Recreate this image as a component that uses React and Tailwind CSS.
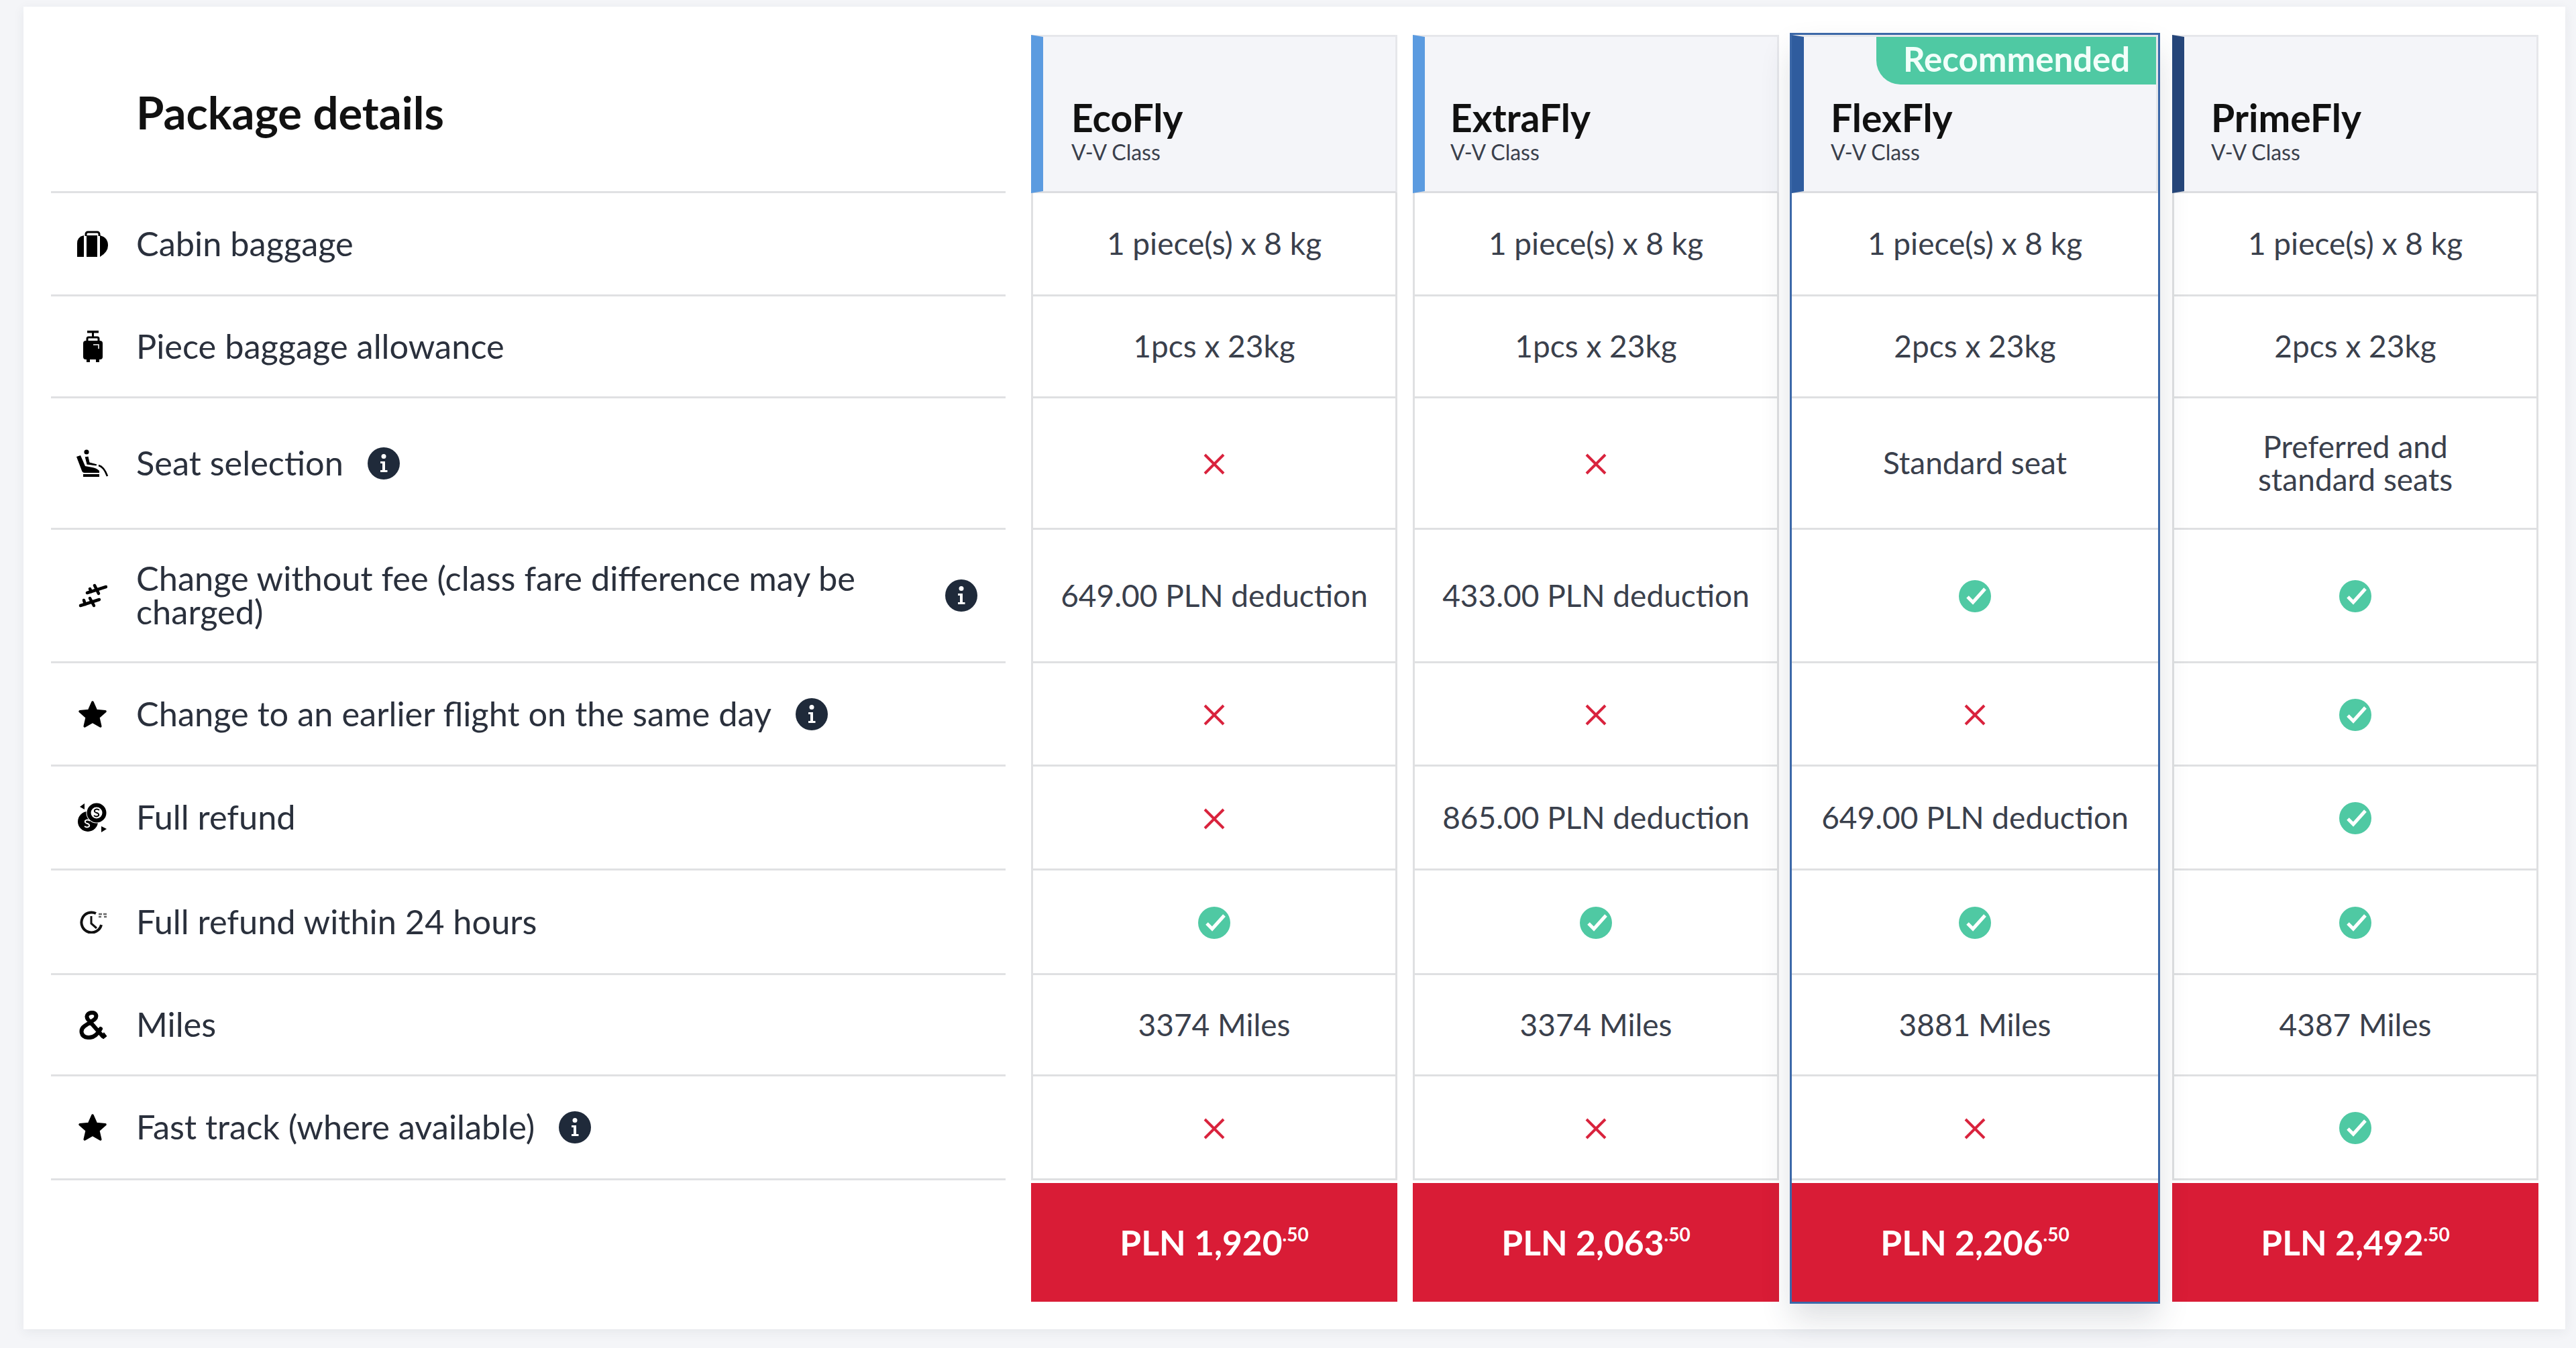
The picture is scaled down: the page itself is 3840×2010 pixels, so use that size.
const FONT = "font-['Lato','Liberation_Sans',sans-serif]";

function CabinIcon() {
  return (
    <svg viewBox="0 0 46 39" className="w-[46px] h-[39px]" fill="#000">
      <path d="M13 8V5a3 3 0 0 1 3-3h14a3 3 0 0 1 3 3v3" fill="none" stroke="#000" strokeWidth="3" />
      <path d="M0 39V19Q0 9 10 7V39Z" />
      <rect x="14" y="7" width="16" height="32" />
      <path d="M34 7Q46 10 46 22Q46 32 34 39Z" />
    </svg>
  );
}
function PieceIcon() {
  return (
    <svg viewBox="0 0 29 47" className="w-[29px] h-[47px]" fill="#000">
      <rect x="6" y="0" width="17" height="3.5" />
      <rect x="13" y="3" width="3" height="8" />
      <path d="M6 16v-4a2 2 0 0 1 2-2h13a2 2 0 0 1 2 2v4" fill="none" stroke="#000" strokeWidth="3" />
      <rect x="0" y="15" width="29" height="28" rx="4" />
      <rect x="5" y="42" width="5" height="5" />
      <rect x="19" y="42" width="5" height="5" />
      <path d="M15 21h8v6" fill="none" stroke="#fff" strokeWidth="1.5" />
    </svg>
  );
}
function SeatIcon() {
  return (
    <svg viewBox="0 0 48 42" className="w-[48px] h-[42px]" fill="#000">
      <circle cx="15" cy="4" r="3.6" />
      <path d="M0 11L6 9L13 25L24 27Q30 28 34 32V35H12Q9 35 8 32Z" />
      <path d="M12 11L18 10L20 19L31 22L30 25L15 23Z" stroke="#fff" strokeWidth="1.2" />
      <rect x="10" y="37" width="24" height="4" />
      <path d="M33 24Q41 26 46 40" fill="none" stroke="#000" strokeWidth="2.6" />
    </svg>
  );
}
function ChangeIcon() {
  return (
    <svg viewBox="0 0 43 37" className="w-[43px] h-[37px]" fill="none" stroke="#000" strokeWidth="4.500" strokeLinecap="round">
      <path d="M13 14L41 5" />
      <path d="M27 9L24 3" />
      <path d="M19 12L17 8" />
      <path d="M27 9L30 15" />
      <path d="M3 33L31 24" />
      <path d="M10 31L8 25" />
      <path d="M20 27.500L17 22" />
      <path d="M20 27.500L23 33" />
    </svg>
  );
}
function StarIcon() {
  return (
    <svg viewBox="0 0 44 42" className="w-[44px] h-[42px]" fill="#000" stroke="#000" strokeWidth="3.5" strokeLinejoin="round">
      <path d="M22 3L27.500 15.500L41 16.800L30.800 25.800L33.800 39L22 32.200L10.200 39L13.200 25.800L3 16.800L16.500 15.500Z" />
    </svg>
  );
}
function RefundIcon() {
  return (
    <svg viewBox="0 0 44 44" className="w-[44px] h-[44px]">
      <circle cx="15" cy="28" r="15" fill="#000" />
      <circle cx="28" cy="15" r="15.500" fill="#fff" />
      <circle cx="28" cy="15" r="11.500" fill="none" stroke="#000" strokeWidth="6" />
      <path d="M32 11Q28 8 25 11Q24 14 28 15Q32 16 31 19Q28 22 24 19" fill="none" stroke="#000" strokeWidth="2" />
      <path d="M18 27Q14 24 11 27Q10 30 14 31Q18 32 17 35Q14 38 10 35" fill="none" stroke="#fff" strokeWidth="2" />
      <path d="M10 1L3 6L10 10Z" fill="#000" />
      <path d="M35 35L43 39L35 44Z" fill="#000" />
    </svg>
  );
}
function ClockIcon() {
  return (
    <svg viewBox="0 0 43 35" className="w-[43px] h-[35px]" fill="none" stroke="#111" strokeWidth="4">
      <path d="M26 5A15 15 0 1 0 34 22" />
      <path d="M19 9V20L27 27" strokeWidth="3" />
      <path d="M30 6h5M30 10h4M37 6h5M38 10h4" strokeWidth="2.400" stroke="#666" />
    </svg>
  );
}
function MilesIcon() {
  return (
    <svg viewBox="0 0 43 43" className="w-[43px] h-[43px]" fill="none" stroke="#000" strokeWidth="6" strokeLinecap="round">
      <path d="M36 38L14 13C10 7 15 3 20 3C27 3 28 9 24 13L9 23C2 28 3 39 14 40C22 41 28 36 33 27" />
      <path d="M38 33L42 38L37 42L33 38Z" fill="#000" strokeWidth="1" />
    </svg>
  );
}
function InfoIcon() {
  return (
    <svg viewBox="0 0 48 48" className="w-[48px] h-[48px] shrink-0">
      <circle cx="24" cy="24" r="24" fill="#1f2a3a" />
      <circle cx="24" cy="13.500" r="3.500" fill="#fff" />
      <path d="M19 21H26V34H29.500V37H19V34H22V24H19Z" fill="#fff" />
    </svg>
  );
}
function CheckIcon() {
  return (
    <svg viewBox="0 0 48 48" className="mt-[2px] w-[48px] h-[48px]">
      <circle cx="24" cy="24" r="24" fill="#4fc9a3" />
      <path d="M13 25L21 33L39 13" fill="none" stroke="#fff" strokeWidth="5" />
    </svg>
  );
}
function CrossIcon() {
  return (
    <svg viewBox="0 0 32 32" className="mt-[3px] w-[32px] h-[32px]">
      <path d="M2 2L30 30M30 2L2 30" fill="none" stroke="#d9233d" strokeWidth="4" />
    </svg>
  );
}

const YES = "yes";
const NO = "no";

const rows = [
  { h: "h-[154px]", icon: <CabinIcon />, label: "Cabin baggage", cells: ["1 piece(s) x 8 kg", "1 piece(s) x 8 kg", "1 piece(s) x 8 kg", "1 piece(s) x 8 kg"] },
  { h: "h-[152px]", icon: <PieceIcon />, label: "Piece baggage allowance", cells: ["1pcs x 23kg", "1pcs x 23kg", "2pcs x 23kg", "2pcs x 23kg"] },
  { h: "h-[196px]", icon: <SeatIcon />, label: "Seat selection", info: true, cells: [NO, NO, "Standard seat", "Preferred and standard seats"] },
  { h: "h-[199px]", icon: <ChangeIcon />, label: "Change without fee (class fare difference may be charged)", wide: true, info: true, cells: ["649.00 PLN deduction", "433.00 PLN deduction", YES, YES] },
  { h: "h-[154px]", icon: <StarIcon />, label: "Change to an earlier flight on the same day", info: true, cells: [NO, NO, NO, YES] },
  { h: "h-[155px]", icon: <RefundIcon />, label: "Full refund", cells: [NO, "865.00 PLN deduction", "649.00 PLN deduction", YES] },
  { h: "h-[156px]", icon: <ClockIcon />, label: "Full refund within 24 hours", cells: [YES, YES, YES, YES] },
  { h: "h-[151px]", icon: <MilesIcon />, label: "Miles", cells: ["3374 Miles", "3374 Miles", "3881 Miles", "4387 Miles"] },
  { h: "h-[155px]", icon: <StarIcon />, label: "Fast track (where available)", info: true, cells: [NO, NO, NO, YES] },
];

const packages = [
  { name: "EcoFly", accent: "border-l-[#5b9be0]", price: "PLN 1,920", shift: "", pad: "pl-[42px]" },
  { name: "ExtraFly", accent: "border-l-[#5b9be0]", price: "PLN 2,063", shift: "ml-[2px]", pad: "pl-[38px]" },
  { name: "FlexFly", accent: "border-l-[#2f5c9e]", price: "PLN 2,206", featured: true, shift: "-ml-[2px]", pad: "pl-[40px]" },
  { name: "PrimeFly", accent: "border-l-[#26467a]", price: "PLN 2,492", shift: "", pad: "pl-[40px]" },
];

function Value({ v }) {
  if (v === YES) return <CheckIcon />;
  if (v === NO) return <CrossIcon />;
  return <span className="px-[40px] pb-[2px] text-center text-[46px] leading-[49px] text-[#3a404c]">{v}</span>;
}

function Column({ pkg, index }) {
  const side = pkg.featured ? "" : "border-x-[3px] border-x-[#dfe0e2]";
  return (
    <div
      className={
        pkg.featured
          ? `relative z-10 flex w-[546px] flex-col outline-[3px] outline-[#3c68a8] shadow-[0_24px_44px_rgba(40,50,70,0.16)] ${pkg.shift}`
          : `relative flex w-[546px] flex-col ${pkg.shift}`
      }
    >
      <div className={`relative flex h-[236px] flex-col border-l-[18px] border-t-[3px] border-r-[3px] border-b-[3px] border-t-[#e6e7eb] border-r-[#e6e7eb] border-b-[#dcdde0] bg-[#f4f5f9] pt-[90px] ${pkg.accent} ${pkg.pad}`}>
        {pkg.featured && (
          <div className="absolute right-0 top-0 flex h-[71px] w-[417px] items-center rounded-bl-[36px] bg-[#4fc9a3] pb-[4px] pl-[40px] text-[51px] font-bold text-[#f2fffa]">
            Recommended
          </div>
        )}
        <div className="text-[57px] font-bold leading-[60px] text-[#111]">{pkg.name}</div>
        <div className="mt-[6px] text-[32px] leading-[32px] text-[#3a404c]">V-V Class</div>
      </div>
      {rows.map((r) => (
        <div key={r.label} className={`flex items-center justify-center border-b-[3px] border-b-[#dfe0e2] bg-white ${side} ${r.h}`}>
          <Value v={r.cells[index]} />
        </div>
      ))}
      <div className="mt-[4px] flex h-[177px] items-center justify-center bg-[#d91c36] text-white">
        <span className="text-[51.500px] font-bold leading-none">{pkg.price}</span>
        <span className="mb-[26px] text-[28px] font-bold leading-none">.50</span>
      </div>
    </div>
  );
}

export default function App() {
  return (
    <div className={`h-[2010px] w-full bg-[#f4f5f8] pl-[35px] pt-[10px] ${FONT}`}>
      <div className="flex h-[1972px] w-[3789px] items-start bg-white pl-[41px] pt-[42px] shadow-[0_4px_16px_rgba(40,50,70,0.07)]">
        <div className="flex w-[1423px] flex-col">
          <div className="flex h-[236px] items-center border-b-[3px] border-b-[#e0e1e3] pb-[2px] pl-[127px] text-[67px] font-bold text-[#111]">
            Package details
          </div>
          {rows.map((r) => (
            <div key={r.label} className={`flex items-center border-b-[3px] border-b-[#e0e1e3] ${r.h}`}>
              <div className="flex w-[127px] shrink-0 justify-center pl-[24px] pr-[27px]">{r.icon}</div>
              <div className={`pb-[2px] text-[50.500px] leading-[50px] text-[#2a303c] ${r.wide ? "w-[1170px]" : ""}`}>{r.label}</div>
              {r.info && <div className="ml-[36px]"><InfoIcon /></div>}
            </div>
          ))}
        </div>
        <div className="ml-[38px] flex gap-[21px]">
          {packages.map((p, i) => (
            <Column key={p.name} pkg={p} index={i} />
          ))}
        </div>
      </div>
    </div>
  );
}
